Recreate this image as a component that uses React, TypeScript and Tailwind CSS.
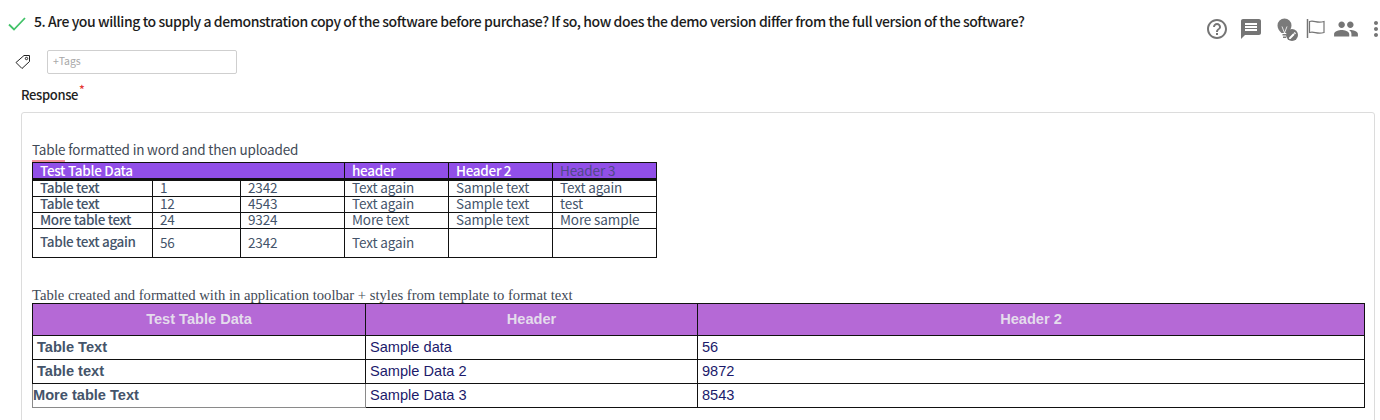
import React from "react";
import { MdHelpOutline, MdMessage, MdPeople, MdMoreVert, MdEdit } from "react-icons/md";

const sans = "font-['Noto_Sans_CJK_SC','Noto_Sans',sans-serif]";
const bd = "border border-[#111]";
const t1 = "text-[13.5px] leading-[13px] tracking-[-0.13px] text-[#44546a] px-[7px] pb-[2px] align-middle";
const th = "border border-b-[3px] border-[#111] px-[7px] pb-[1px] text-[13.5px] font-medium leading-[12px] tracking-[-0.3px] text-white";
const bold = "font-medium tracking-[-0.35px]";

const rows1 = [
  ["Table text", "1", "2342", "Text again", "Sample text", "Text again"],
  ["Table text", "12", "4543", "Text again", "Sample text", "test"],
  ["More table text", "24", "9324", "More text", "Sample text", "More sample"],
];

const rows2 = [
  ["Table Text", "Sample data", "56"],
  ["Table text", "Sample Data 2", "9872"],
  ["More table Text", "Sample Data 3", "8543"],
];

export default function App() {
  return (
    <div className={`h-[420px] w-[1380px] overflow-hidden bg-white ${sans}`}>
      <div className="flex h-[50px] items-start">
        <svg width="18" height="14" viewBox="0 0 18 14" className="ml-[8px] mt-[17px]" fill="none" stroke="#41c268" strokeWidth="1.8">
          <path d="M1 7.500l5 5L17 1" />
        </svg>
        <div className="ml-[8px] mt-[10px] text-[14px] font-medium leading-[22px] tracking-[-0.42px] text-[#1c1c1c]">
          5. Are you willing to supply a demonstration copy of the software before purchase? If so, how does the demo version differ from the full version of the software?
        </div>
        <div className="ml-auto mr-[-8px] mt-[16px] flex items-center text-[#757575]">
          <MdHelpOutline size={24} />
          <MdMessage size={24} className="ml-[10px]" />
          <span className="relative ml-[10px] h-[24px] w-[24px]">
            <svg width="24" height="24" viewBox="0 0 24 24" fill="#7a7a7a">
              <path d="M9.500 18.500h4V17h-4zM10 21h3v-1.500h-3zM11.500 1.500a7 7 0 0 0-7 7c0 3 1.600 5 4 7.500h6c2.400-2.500 4-4.500 4-7.500a7 7 0 0 0-7-7z" />
              <path d="M9 9.500l2.500 6.500M14 9.500L11.500 16" stroke="#fff" strokeWidth="0.800" fill="none" />
            </svg>
            <span className="absolute bottom-[0px] right-[-1px] flex h-[12px] w-[12px] items-center justify-center rounded-full bg-[#757575] text-white">
              <MdEdit size={9} />
            </span>
          </span>
          <svg width="22" height="22" viewBox="0 0 22 22" fill="none" stroke="#757575" strokeWidth="1.200" className="ml-[8px]">
            <path d="M2.500 1v19" strokeWidth="1.500" />
            <path d="M4.500 3.500c5-1.500 7 2 14.500 0v11c-7.500 2-9.500-1.500-14.500 0z" />
          </svg>
          <MdPeople size={26} className="ml-[6px]" />
          <MdMoreVert size={24} className="ml-[5px]" />
        </div>
      </div>

      <div className="flex items-center">
        <svg width="16" height="16" viewBox="0 0 16 16" fill="none" stroke="#222" strokeWidth="1" className="ml-[15px]">
          <path d="M1 8.500 9 1.500h5.500v6l-7.500 7z" />
          <circle cx="11.500" cy="4.500" r="1.200" />
        </svg>
        <div className="ml-[16px] flex h-[24px] w-[190px] items-center rounded-[2px] border border-[#cfcfcf] px-[5px] pb-[2px] text-[10.5px] tracking-[-0.1px] text-[#a8a8a8]">+Tags</div>
      </div>

      <div className="ml-[21px] mt-[8px] flex h-[22px] items-start text-[13px] font-medium leading-[26px] tracking-[-0.35px] text-[#222]">
        Response<span className="ml-[1px] text-[12px] leading-[14px] text-[#e53935]">*</span>
      </div>

      <div className="mx-[5px] ml-[21px] mt-[8px] h-[320px] rounded-t-[3px] border border-[#dcdcdc] pl-[10px] pt-[28px]">
        <div className="relative h-[21px] text-[13.5px] leading-[17px] tracking-[-0.17px] text-[#3f4a56]">
          Table formatted in word and then uploaded
          <span className="absolute left-0 top-[19px] h-[2px] w-[33px] bg-[#f0909a]" />
        </div>
        <table className="w-[625px] table-fixed border-collapse">
          <colgroup>
            <col className="w-[120px]" />
            <col className="w-[88px]" />
            <col className="w-[104px]" />
            <col className="w-[104px]" />
            <col className="w-[104px]" />
            <col className="w-[104px]" />
          </colgroup>
          <tbody>
            <tr className="h-[17px] bg-[#914fe8]">
              <td colSpan={3} className={th}>Test Table Data</td>
              <td className={th}>header</td>
              <td className={th}>Header 2</td>
              <td className={`${bd} border-b-[3px] px-[7px] pb-[1px] text-[13.5px] leading-[12px] tracking-[-0.13px] text-[#4f4a86]`}>Header 3</td>
            </tr>
            {rows1.map((r, i) => (
              <tr key={i} className="h-[16px]">
                {r.map((c, j) => (
                  <td key={j} className={`${bd} ${t1} ${j === 0 ? bold : ""}`}>{c}</td>
                ))}
              </tr>
            ))}
            <tr className="h-[29px]">
              {["Table text again", "56", "2342", "Text again", "", ""].map((c, j) => (
                <td key={j} className={`${bd} ${t1} ${j === 0 ? `${bold} !pb-[4px]` : ""}`}>{c}</td>
              ))}
            </tr>
          </tbody>
        </table>

        <div className="mt-[29px] h-[16px] whitespace-nowrap font-['Liberation_Serif',serif] text-[14.65px] leading-[17px] text-[#3f4a56]">
          Table created and formatted with in application toolbar + styles from template to format text
        </div>
        <table className="w-[1332px] table-fixed border-collapse font-['Liberation_Sans',sans-serif]">
          <colgroup>
            <col className="w-[333px]" />
            <col className="w-[332px]" />
            <col className="w-[667px]" />
          </colgroup>
          <tbody>
            <tr className="h-[32px] bg-[#b569d6] text-[14.6px] font-bold text-[#e4dcec]">
              <td className={`${bd} pt-[1px] text-center`}>Test Table Data</td>
              <td className={`${bd} pt-[1px] text-center`}>Header</td>
              <td className={`${bd} pt-[1px] text-center`}>Header 2</td>
            </tr>
            {rows2.map((r, i) => (
              <tr key={i} className="h-[24px] text-[14.6px] leading-[16px]">
                <td className={`border ${i === 2 ? "border-x-[#8a8a8a] border-b-[#8a8a8a] border-t-[#111] px-0" : "border-[#111] px-[4px]"} pb-[2px] font-bold text-[#44546a]`}>{r[0]}</td>
                <td className={`${bd} px-[4px] pb-[2px] text-[#1b1a6b]`}>{r[1]}</td>
                <td className={`${bd} px-[4px] pb-[2px] text-[#1b1a6b]`}>{r[2]}</td>
              </tr>
            ))}
          </tbody>
        </table>
      </div>
    </div>
  );
}
